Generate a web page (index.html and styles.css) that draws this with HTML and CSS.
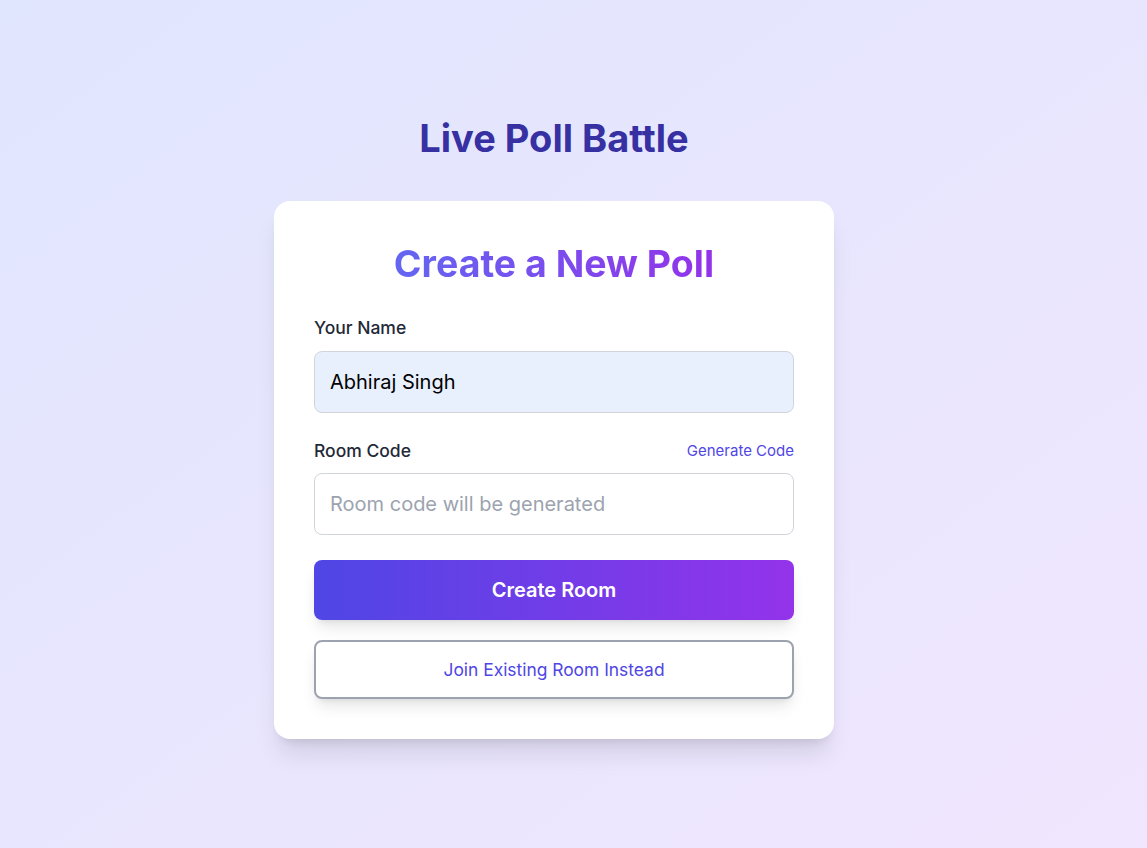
FILE: index.html
```html
<!DOCTYPE html>
<html lang="en">
<head>
<meta charset="utf-8">
<title>Live Poll Battle</title>
<link rel="stylesheet" href="styles.css">
</head>
<body>
<main class="page">
  <h1 class="app-title">Live Poll Battle</h1>
  <section class="card">
    <h2 class="card-title">Create a New Poll</h2>
    <div class="field">
      <label class="label" for="name">Your Name</label>
      <input id="name" class="input input-filled" type="text" value="Abhiraj Singh">
    </div>
    <div class="field">
      <div class="label-row">
        <label class="label" for="code">Room Code</label>
        <a class="link" href="#">Generate Code</a>
      </div>
      <input id="code" class="input" type="text" placeholder="Room code will be generated">
    </div>
    <button class="btn-primary" type="button">Create Room</button>
    <button class="btn-secondary" type="button">Join Existing Room Instead</button>
  </section>
</main>
</body>
</html>
```

FILE: styles.css
```css
* { box-sizing: border-box; }
html, body { margin: 0; height: 100%; }
body {
  font-family: Inter, "Noto Sans", sans-serif;
  background: linear-gradient(to bottom right, #e0e6fe, #f0e6fe);
  min-height: 848px;
}
.page {
  display: flex;
  flex-direction: column;
  align-items: center;
  padding-top: 118px;
  padding-right: 39px;
}
.app-title {
  margin: 0 0 43px;
  font-size: 38px;
  line-height: 40px;
  font-weight: 700;
  color: #3730a3;
}
.card {
  width: 560px;
  background: #fff;
  border-radius: 16px;
  padding: 40px 40px 40px;
  box-shadow: 0 20px 25px -5px rgba(0,0,0,0.1), 0 8px 10px -6px rgba(0,0,0,0.1);
  display: flex;
  flex-direction: column;
}
.card-title {
  margin: 3px 0 32px;
  text-align: center;
  font-size: 37.5px;
  line-height: 40px;
  font-weight: 700;
  background: linear-gradient(to right, #6366f1, #9333ea);
  -webkit-background-clip: text;
  background-clip: text;
  color: transparent;
  align-self: center;
}
.field { display: flex; flex-direction: column; margin-bottom: 26px; }
.field + .field { margin-bottom: 25px; }
.label-row {
  display: flex;
  justify-content: space-between;
  align-items: center;
  margin-bottom: 10px;
}
.label-row .label { margin-bottom: 0; }
.label {
  font-size: 17.5px;
  line-height: 24px;
  font-weight: 500;
  color: #1f2937;
  margin-bottom: 11px;
}
.link {
  font-size: 15px;
  line-height: 20px;
  color: #4f46e5;
  text-decoration: none;
}
.input {
  width: 100%;
  height: 62px;
  padding: 0 15px;
  font-family: inherit;
  font-size: 20px;
  color: #000;
  border: 1px solid #d1d5db;
  border-radius: 8px;
  background: #fff;
  outline: none;
}
.input::placeholder { color: #9ca3af; }
.input-filled { background: #e8f0fe; }
.btn-primary {
  height: 60px;
  border: none;
  border-radius: 8px;
  background: linear-gradient(to right, #4f46e5, #9333ea);
  color: #fff;
  font-family: inherit;
  font-size: 20px;
  font-weight: 600;
  box-shadow: 0 10px 15px -3px rgba(0,0,0,0.1), 0 4px 6px -4px rgba(0,0,0,0.1);
  margin-bottom: 20px;
}
.btn-secondary {
  height: 59px;
  border: 2px solid #9ca3af;
  border-radius: 8px;
  background: #fff;
  color: #4f46e5;
  font-family: inherit;
  font-size: 17.4px;
  font-weight: 400;
  box-shadow: 0 10px 15px -3px rgba(0,0,0,0.1), 0 4px 6px -4px rgba(0,0,0,0.1);
}
```
